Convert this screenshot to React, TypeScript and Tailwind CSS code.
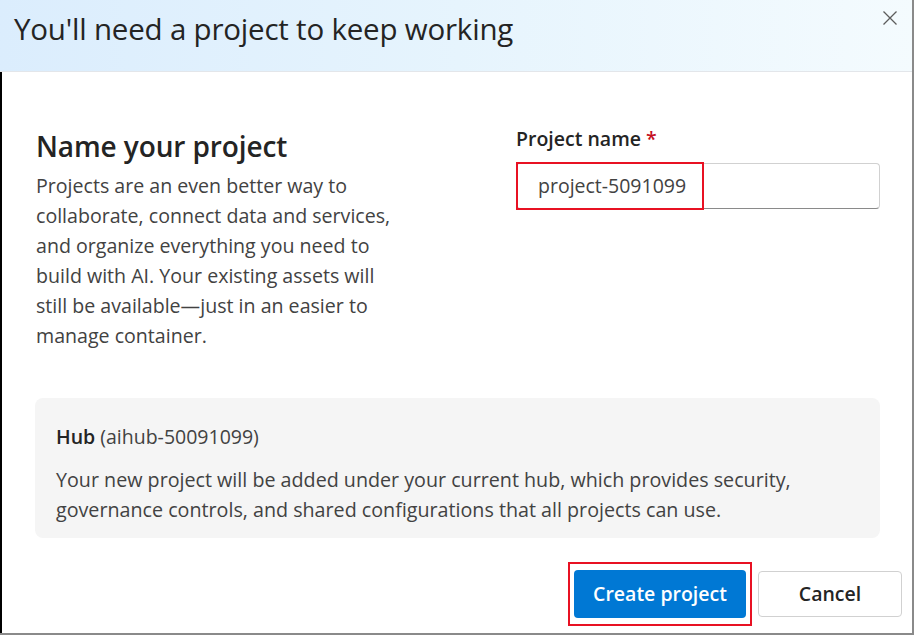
import React from "react";

export default function App() {
  return (
    <div
      className="w-[915px] h-[636px] bg-white text-[#242424]"
      style={{ fontFamily: '"Open Sans", "Noto Sans", sans-serif' }}
    >
      <div className="w-[914px] h-[635px] flex flex-col border-r-2 border-b-2 border-[#8a8a8a]">
        {/* Header */}
        <div className="h-[72px] shrink-0 flex justify-between border-b border-[#e3e6ea] bg-gradient-to-r from-[#dbedfd] via-[#e6f4fd] to-[#f4fbfe]">
          <h1 className="pl-[14px] pt-[10px] text-[29.5px] leading-[38px] text-[#242424] tracking-[-0.2px]">
            You'll need a project to keep working
          </h1>
          <button className="mr-[12px] mt-[8px] w-[20px] h-[20px] flex items-center justify-center text-[#5c5c5c]">
            <svg width="16" height="16" viewBox="0 0 16 16" fill="none">
              <path d="M1.5 1.5 L14.5 14.5 M14.5 1.5 L1.5 14.5" stroke="currentColor" strokeWidth="1.3" />
            </svg>
          </button>
        </div>

        {/* Body */}
        <div className="flex-1 flex flex-col border-l-2 border-black">
          <div className="pl-[33px] pr-[32px] pt-[56px]">
            <div className="flex">
              <div className="w-[420px] pl-[1px]">
                <h2 className="text-[28px] leading-[36px] font-semibold text-[#242424] tracking-[-0.1px]">
                  Name your project
                </h2>
                <p className="mt-[7px] text-[19.6px] leading-[30px] text-[#424242] whitespace-nowrap">
                  Projects are an even better way to
                  <br />
                  collaborate, connect data and services,
                  <br />
                  and organize everything you need to
                  <br />
                  build with AI. Your existing assets will
                  <br />
                  still be available—just in an easier to
                  <br />
                  manage container.
                </p>
              </div>
              <div className="ml-auto w-[364px] -mt-[2px]">
                <div className="text-[19.5px] leading-[26px] font-semibold text-[#242424]">
                  Project name <span className="text-[#c50f1f]">*</span>
                </div>
                <div className="relative mt-[11px] h-[46px] rounded-[4px] border border-[#d1d1d1] border-b-[#8a8a8a] bg-white flex items-center pl-[21px]">
                  <span className="text-[19.5px] text-[#424242]">project-5091099</span>
                  <div className="absolute -left-[1px] -top-[2px] w-[188px] h-[48px] border-2 border-[#e81123]" />
                </div>
              </div>
            </div>

            <div className="mt-[47px] rounded-[8px] bg-[#f5f5f5] pl-[21px] pr-[16px] pt-[26px] pb-[13px]">
              <div className="text-[19.5px] leading-[26px] text-[#424242]">
                <span className="font-semibold text-[#242424]">Hub</span> (aihub-50091099)
              </div>
              <p className="mt-[15px] text-[19.7px] leading-[30px] text-[#424242] whitespace-nowrap">
                Your new project will be added under your current hub, which provides security,
                <br />
                governance controls, and shared configurations that all projects can use.
              </p>
            </div>
          </div>

          <div className="mt-[24px] flex justify-end items-center pr-[10px]">
            <div className="border-2 border-[#e81123] px-[4px] py-[6px]">
              <button className="w-[172px] h-[48px] rounded-[4px] bg-[#0078d4] text-white text-[19.5px] font-semibold">
                Create project
              </button>
            </div>
            <button className="ml-[6px] w-[144px] h-[46px] rounded-[4px] border border-[#d1d1d1] bg-white text-[19.5px] font-semibold text-[#242424]">
              Cancel
            </button>
          </div>
        </div>
      </div>
    </div>
  );
}
